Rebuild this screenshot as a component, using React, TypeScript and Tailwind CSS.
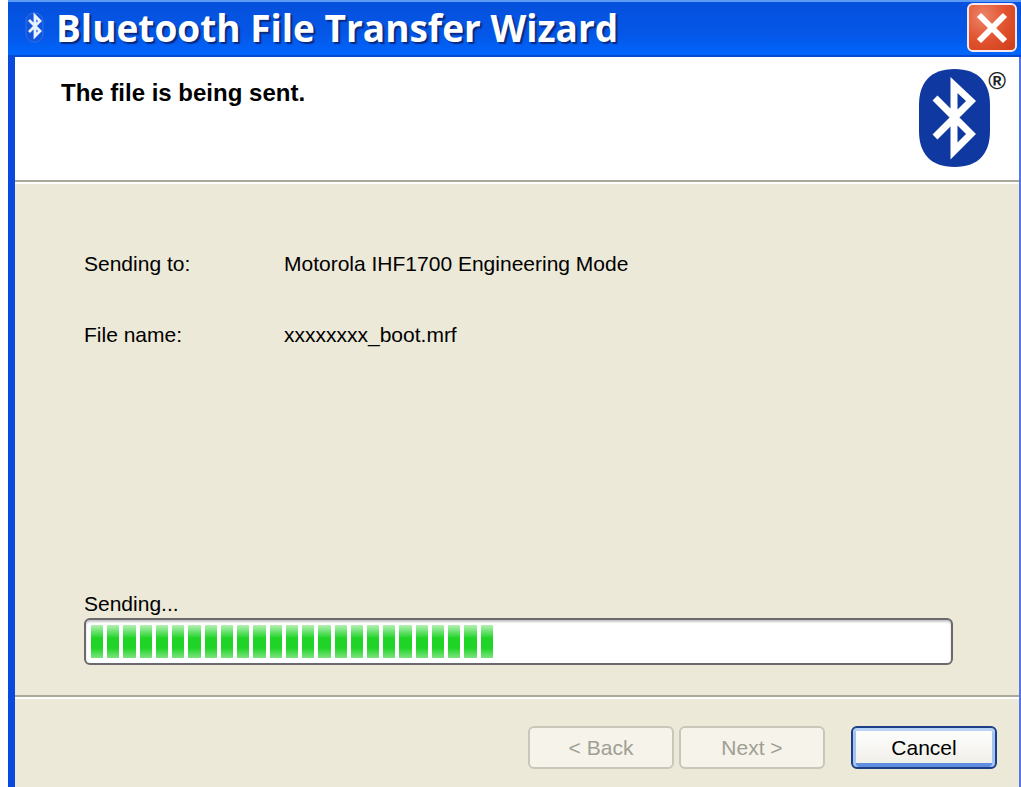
import type { ReactNode } from 'react';

const TOTAL_PERCENT = 47;
const BLOCKS = 25;

const details = [
    { label: 'Sending to:', value: 'Motorola IHF1700 Engineering Mode' },
    { label: 'File name:', value: 'xxxxxxxx_boot.mrf' },
];

function TitleBar() {
    return (
        <header className="flex h-[57px] items-center justify-between border-t-2 border-[#5c9bf5] bg-linear-to-b from-[#0550dc] via-[#0557e8] via-60% to-[#0068ff] pr-1 pb-1 pl-4 shadow-[inset_0_-2px_0_#0748cf]">
            <div className="flex items-center gap-3">
                <svg className="h-8 w-5" viewBox="0 0 20 32" fill="none" aria-hidden="true">
                    <rect x="2" y="1" width="17" height="29" rx="8" fill="#1254dc" stroke="#2d70e8" />
                    <path d="M5 8L16 19L11 24V4L16 9L5 20" stroke="#e8f2ff" strokeWidth="2.8" />
                </svg>
                <h1 className="font-['Open_Sans',sans-serif] text-[37px] leading-10 font-bold whitespace-nowrap text-white [text-shadow:2px_2px_1px_#0a2a80]">
                    Bluetooth File Transfer Wizard
                </h1>
            </div>
            <button
                type="button"
                aria-label="Close"
                className="flex h-[49px] w-[50px] items-center justify-center rounded-md border-2 border-[#f6e8ee] bg-radial-[at_30%_25%] from-[#ec8468] via-[#e2532f] to-[#cc3d18]"
            >
                <svg className="h-8 w-8" viewBox="0 0 32 32" fill="none" aria-hidden="true">
                    <path d="M3 3L29 29M29 3L3 29" stroke="#fff" strokeWidth="6" />
                </svg>
            </button>
        </header>
    );
}

function BluetoothLogo() {
    return (
        <div className="flex items-start">
            <svg className="h-[98px] w-[71px]" viewBox="0 0 71 98" aria-hidden="true">
                <path
                    d="M35.5 0C60 0 71 14 71 36V62C71 84 60 98 35.5 98S0 84 0 62V36C0 14 11 0 35.5 0Z"
                    fill="#0f39a0"
                />
                <path
                    d="M16 29L52 65L35 82V16L52 32L16 68"
                    fill="none"
                    stroke="#fff"
                    strokeWidth="7"
                />
            </svg>
            <span className="-ml-0.5 font-['Liberation_Sans',sans-serif] text-2xl leading-6 font-bold text-[#222]">
                ®
            </span>
        </div>
    );
}

function ProgressBar() {
    return (
        <div
            role="progressbar"
            aria-labelledby="progress-label"
            aria-valuenow={TOTAL_PERCENT}
            aria-valuemin={0}
            aria-valuemax={100}
            className="h-[47px] rounded-md border-2 border-[#6b696b] bg-white p-[5px] shadow-[inset_0_2px_2px_#c8c8c8]"
        >
            <div className="flex h-full gap-1" style={{ width: `${TOTAL_PERCENT}%` }}>
                {Array.from({ length: BLOCKS }, (_, i) => (
                    <span
                        key={i}
                        className="flex-1 bg-[linear-gradient(#b5f0b5,#1fd427_40%,#1fd427_70%,#7de380)]"
                    />
                ))}
            </div>
        </div>
    );
}

function WizardButton({ children, disabled }: { children: ReactNode; disabled?: boolean }) {
    return (
        <button
            type="button"
            disabled={disabled}
            className="h-[43px] w-[146px] rounded-md border-2 border-[#1c3f86] bg-linear-to-b from-white to-[#eeede6] shadow-[inset_0_3px_0_#b9d2f8,inset_3px_0_0_#a5c4f3,inset_-3px_0_0_#a5c4f3,inset_0_-4px_0_#5f8de0] disabled:border-[#c9c7ba] disabled:bg-[#f5f3ea] disabled:bg-none disabled:text-[#a09f93] disabled:shadow-none"
        >
            {children}
        </button>
    );
}

export default function App() {
    return (
        <div className="min-h-screen bg-white pl-2 font-['Liberation_Sans',sans-serif] text-[21px] leading-6 text-black">
            <div className="flex min-h-screen flex-col">
                <TitleBar />
                <div className="flex flex-1 flex-col border-r-2 border-l-[7px] border-r-[#5577e0] border-l-[#0a49dd] bg-[#ece9d8]">
                    <section className="flex h-[125px] items-start justify-between border-b-2 border-[#aca899] bg-white pt-3 pr-[13px] pl-[46px]">
                        <h2 className="pt-3 text-2xl leading-6 font-bold">The file is being sent.</h2>
                        <BluetoothLogo />
                    </section>

                    <main className="flex flex-1 flex-col justify-between border-t-2 border-white pt-[68px] pr-[66px] pb-[30px] pl-[69px]">
                        <dl className="grid grid-cols-[200px_1fr] gap-y-[47px]">
                            {details.map((item) => (
                                <div key={item.label} className="contents">
                                    <dt>{item.label}</dt>
                                    <dd>{item.value}</dd>
                                </div>
                            ))}
                        </dl>
                        <div>
                            <p id="progress-label" className="pb-0.5">
                                Sending...
                            </p>
                            <ProgressBar />
                        </div>
                    </main>

                    <footer className="border-t-2 border-[#aca899]">
                        <div className="flex justify-end border-t-2 border-white pt-[27px] pr-[22px] pb-[18px]">
                            <div className="flex gap-[5px] pr-[26px]">
                                <WizardButton disabled>&lt; Back</WizardButton>
                                <WizardButton disabled>Next &gt;</WizardButton>
                            </div>
                            <WizardButton>Cancel</WizardButton>
                        </div>
                    </footer>
                </div>
            </div>
        </div>
    );
}
